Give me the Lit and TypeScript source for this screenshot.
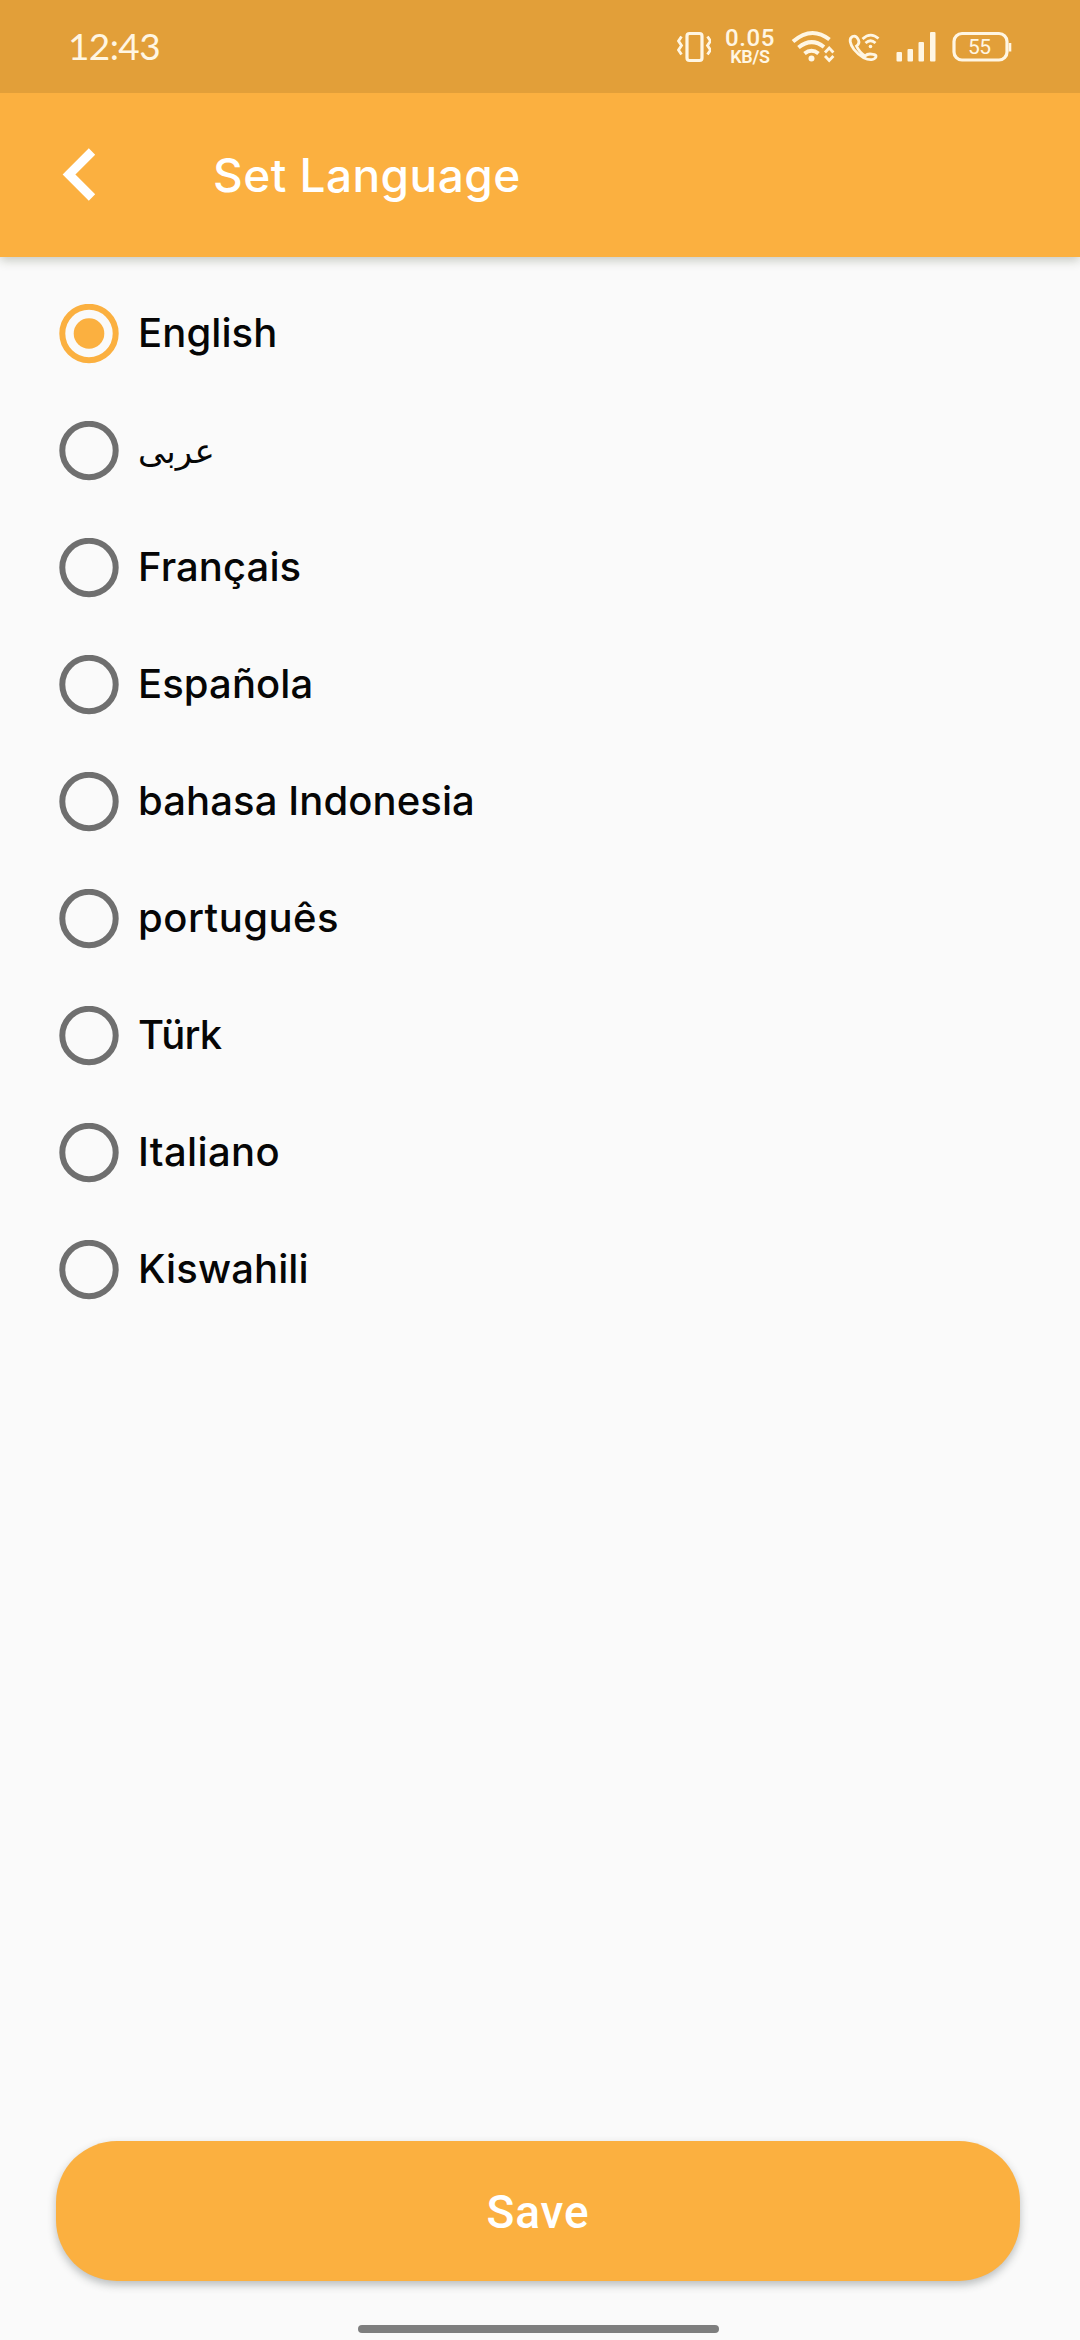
import { LitElement, html, css, svg } from "lit";
import { customElement, property, state } from "lit/decorators.js";
import { classMap } from "lit/directives/class-map.js";
import { styleMap } from "lit/directives/style-map.js";

@customElement("status-bar")
class StatusBar extends LitElement {
  static styles = css`
    :host {
      position: relative;
      z-index: 1;
      display: flex;
      align-items: flex-start;
      box-sizing: border-box;
      height: 93px;
      padding: 0 68px;
      background: #e29f39;
      color: #fff6e3;
      font-family: Lato, "Liberation Sans", sans-serif;
    }
    .clock {
      flex: 0 0 609px;
      padding-top: 24px;
      font-size: 37px;
      line-height: 44px;
      letter-spacing: -0.6px;
    }
    .icon {
      display: block;
      flex: none;
      height: 93px;
    }
    .speed {
      flex: 0 0 50px;
      margin: 28px 16px 0 14px;
      display: flex;
      flex-direction: column;
      align-items: center;
      font-family: Roboto, sans-serif;
      font-weight: 500;
      white-space: nowrap;
    }
    .rate {
      font-size: 24px;
      line-height: 20px;
      letter-spacing: 0.6px;
    }
    .unit {
      font-size: 18px;
      font-weight: 600;
      line-height: 18px;
      letter-spacing: -0.3px;
    }
    .level {
      font: 400 21px Roboto, sans-serif;
    }
  `;

  render() {
    return html`
      <div class="clock">12:43</div>
      <svg class="icon" width="34" viewBox="677 0 34 93" fill="none" stroke="currentColor" stroke-width="3.2">
        <rect x="687" y="33.5" width="15" height="27" rx="2.5" />
        <path d="M681.500 36.500l-3 4.500 3 4.500-3 4.500 3 4.500M707.500 36.500l3 4.500-3 4.500 3 4.500-3 4.500" stroke-width="2.800" />
      </svg>
      <div class="speed"><span class="rate">0.05</span><span class="unit">KB/S</span></div>
      <svg class="icon" width="46" viewBox="791 0 46 93" fill="none" stroke="currentColor" stroke-width="4">
        <path d="M793 41.500Q811.500 25.500 829.500 39.500M798.500 47.500Q811.500 37 824 47M804.500 53.500Q811.500 48 818.500 53.500" />
        <circle cx="811.500" cy="58.500" r="3" fill="currentColor" stroke="none" />
        <path d="M825 52.500l4.200-4.500 4.200 4.500M825 56l4.200 4.500 4.200-4.500" stroke-width="2.800" />
      </svg>
      <svg class="icon" width="46" viewBox="837 0 46 93" fill="none" stroke="currentColor" stroke-width="2.800">
        <path
          d="M852.500 36.500C848.500 38.500 850 44 854 49.500C860 57 867.500 60.500 872.500 59.500C877 58 877 55 873.500 54.500C870 53.500 867 54 865 56C861.500 53.500 858 49.500 856.500 46C858.500 44.500 859.500 42.500 858.500 40C857 36.500 855 35.500 852.500 36.500Z"
        />
        <path d="M862.500 39Q870.500 31.500 878.500 38.500M865.500 43Q870.500 38.500 875.500 43" />
        <circle cx="870.500" cy="46.500" r="1.800" fill="currentColor" stroke="none" />
      </svg>
      <svg class="icon" width="60" viewBox="883 0 60 93" fill="currentColor">
        <rect x="896.500" y="52" width="5.500" height="9.500" rx="1" />
        <rect x="907.500" y="49" width="5.500" height="12.500" rx="1" />
        <rect x="918.500" y="42" width="5.500" height="19.500" rx="1" />
        <rect x="930" y="32" width="5.500" height="29.500" rx="1" />
      </svg>
      <svg class="icon" width="74" viewBox="943 0 74 93" fill="none" stroke="currentColor" stroke-width="3.200">
        <rect x="954" y="33.500" width="53" height="26.500" rx="8" />
        <path d="M1010 43v8.500" stroke-width="2.600" />
        <text class="level" x="979.500" y="54" text-anchor="middle" textLength="23" fill="currentColor" stroke="none">55</text>
      </svg>
    `;
  }
}

@customElement("app-header")
class AppHeader extends LitElement {
  static styles = css`
    :host {
      display: flex;
      align-items: center;
      box-sizing: border-box;
      height: 164px;
      padding-left: 56px;
      background: #fbb040;
      box-shadow: 0 3px 10px rgba(40, 50, 20, 0.26);
      color: #fff;
    }
    .back {
      flex: none;
      width: 48px;
      height: 64px;
      margin: 0 109px 3px 0;
    }
    .title {
      font: 500 46px / 60px Inter, sans-serif;
      letter-spacing: 0.450px;
      white-space: nowrap;
    }
  `;

  render() {
    return html`
      <svg class="back" viewBox="56 141 48 64" fill="none" stroke="currentColor" stroke-width="9">
        <path d="M92 150.500L69 173.500L92 196.500" />
      </svg>
      <div class="title">Set Language</div>
    `;
  }
}

interface Language {
  name: string;
  spacing: number;
  arabic?: boolean;
}

@customElement("language-option")
class LanguageOption extends LitElement {
  @property({ attribute: false }) language!: Language;
  @property({ type: Boolean }) selected = false;

  static styles = css`
    :host {
      display: flex;
      align-items: center;
      height: 117px;
      gap: 19px;
      cursor: pointer;
    }
    .ring {
      flex: none;
      width: 60px;
      height: 60px;
      color: #6f6f6f;
    }
    .on {
      color: #fbb040;
    }
    .label {
      margin-bottom: 2px;
      color: #060606;
      font: 500 40px / 50px Inter, sans-serif;
      white-space: nowrap;
    }
    .ar {
      margin-bottom: 0;
      font: 400 34px / 50px "DejaVu Sans", sans-serif;
    }
  `;

  render() {
    const { name, spacing, arabic } = this.language;
    return html`
      <svg class=${classMap({ ring: true, on: this.selected })} viewBox="0 0 60 60">
        <circle cx="30" cy="29.500" r="26.700" fill="none" stroke="currentColor" stroke-width="6" />
        ${this.selected ? svg`<circle cx="30" cy="29.500" r="15.300" fill="currentColor" />` : null}
      </svg>
      <span
        class=${classMap({ label: true, ar: !!arabic })}
        style=${styleMap({ letterSpacing: `${spacing}px` })}
        >${name}</span
      >
    `;
  }
}

@customElement("app-root")
class AppRoot extends LitElement {
  @state() private current = "English";

  private languages: Language[] = [
    { name: "English", spacing: 0.1 },
    { name: "عربی", spacing: 0, arabic: true },
    { name: "Français", spacing: 0.1 },
    { name: "Española", spacing: 0.1 },
    { name: "bahasa Indonesia", spacing: 0.1 },
    { name: "português", spacing: 0.5 },
    { name: "Türk", spacing: -0.8 },
    { name: "Italiano", spacing: 0.35 },
    { name: "Kiswahili", spacing: 0.1 },
  ];

  static styles = css`
    :host {
      display: flex;
      flex-direction: column;
      box-sizing: border-box;
      width: 1080px;
      height: 2340px;
      background: #fafafa;
      overflow: hidden;
    }
    .list {
      flex: 1;
      padding: 18px 59px 0;
    }
    .save {
      flex: none;
      height: 140px;
      margin: 0 60px 44px 56px;
      padding: 3px 0 0;
      border: 0;
      border-radius: 61px;
      background: #fbb040;
      box-shadow: 0 4px 8px rgba(40, 50, 50, 0.3);
      color: #fff;
      font: 500 46px / 137px Roboto, sans-serif;
      letter-spacing: 0.900px;
    }
    .home {
      flex: none;
      align-self: center;
      width: 361px;
      height: 8px;
      margin: 0 4px 7px 0;
      border-radius: 4px;
      background: #7e7e7e;
    }
  `;

  render() {
    return html`
      <status-bar></status-bar>
      <app-header></app-header>
      <main class="list">
        ${this.languages.map(
          (language) => html`<language-option
            .language=${language}
            .selected=${language.name === this.current}
            @click=${() => (this.current = language.name)}
          ></language-option>`
        )}
      </main>
      <button class="save">Save</button>
      <div class="home"></div>
    `;
  }
}
